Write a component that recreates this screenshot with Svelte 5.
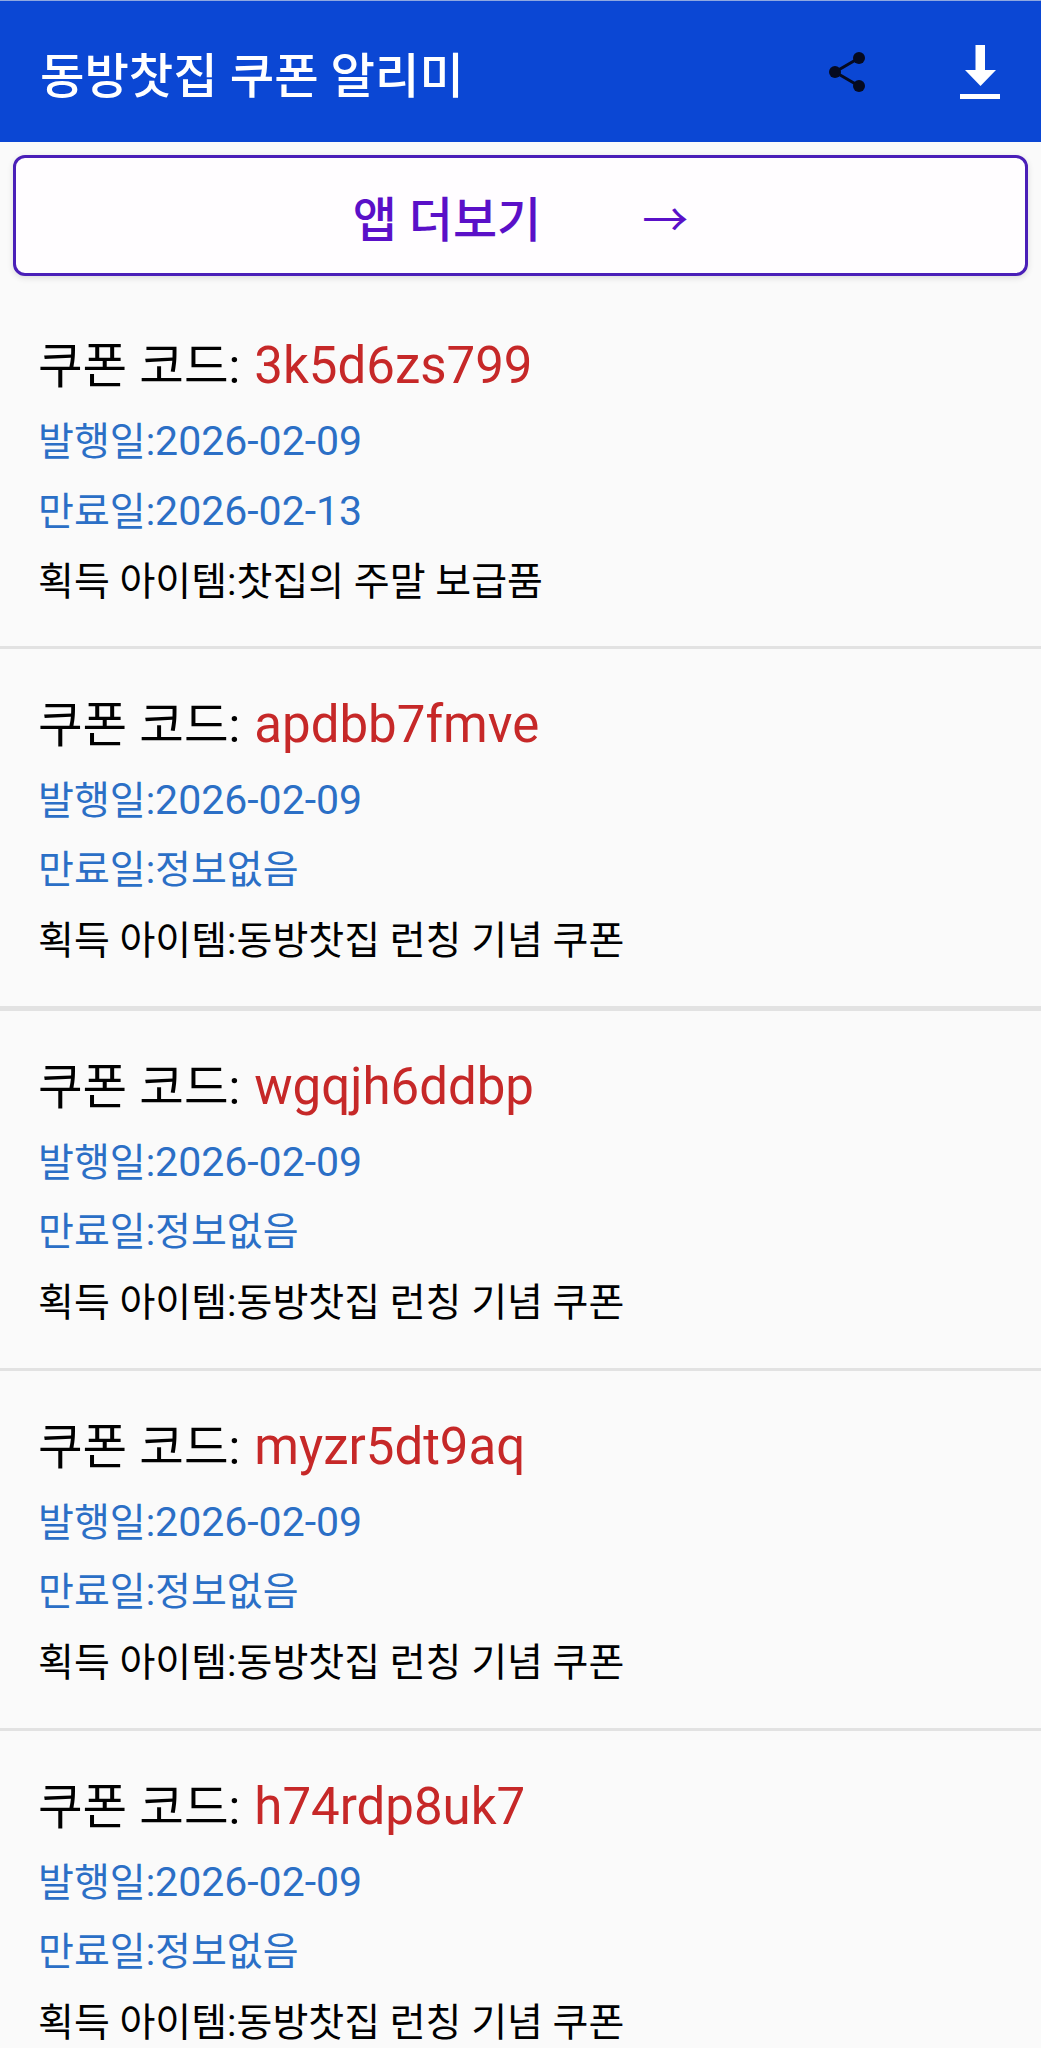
<script lang="ts">
	const coupons = [
		{ code: '3k5d6zs799', expires: '2026-02-13', item: '찻집의 주말 보급품' },
		{ code: 'apdbb7fmve', expires: null, item: '동방찻집 런칭 기념 쿠폰' },
		{ code: 'wgqjh6ddbp', expires: null, item: '동방찻집 런칭 기념 쿠폰' },
		{ code: 'myzr5dt9aq', expires: null, item: '동방찻집 런칭 기념 쿠폰' },
		{ code: 'h74rdp8uk7', expires: null, item: '동방찻집 런칭 기념 쿠폰' }
	];
</script>

<div class="page">
	<header class="bar">
		<h1>동방찻집 쿠폰 알리미</h1>
		<div class="actions">
			<button class="icon" aria-label="공유">
				<svg width="40" height="40" viewBox="0 0 40 40" fill="none">
					<path d="M33 6 L9 20 L33 34" stroke="#050a20" stroke-width="3" />
					<circle cx="33" cy="6" r="6" fill="#050a20" />
					<circle cx="9" cy="20" r="6" fill="#050a20" />
					<circle cx="33" cy="34" r="6" fill="#050a20" />
				</svg>
			</button>
			<button class="icon" aria-label="다운로드">
				<svg width="40" height="54" viewBox="0 0 40 54" fill="#fff">
					<path d="M15.5 0 H25 V25 H36 L20.5 41 L5 25 H15.5 Z" />
					<rect x="0" y="49" width="40" height="5" />
				</svg>
			</button>
		</div>
	</header>

	<button class="more">
		<span>앱 더보기</span>
		<span class="arrow">→</span>
	</button>

	<ul class="list">
		{#each coupons as c}
			<li>
				<div class="code">쿠폰 코드: <em>{c.code}</em></div>
				<div class="date">발행일:<span class="num">2026-02-09</span></div>
				<div class="date">
					만료일:{#if c.expires}<span class="num">{c.expires}</span>{:else}정보없음{/if}
				</div>
				<div class="item">획득 아이템:{c.item}</div>
			</li>
		{/each}
	</ul>
</div>

<style>
	:global(body) {
		margin: 0;
		background: #fafafa;
	}
	.page {
		height: 2048px;
		overflow: hidden;
		background: #fafafa;
		font-family: Roboto, 'Noto Sans CJK KR', sans-serif;
	}
	.bar {
		height: 142px;
		box-sizing: border-box;
		padding: 0 41px 0 40px;
		display: flex;
		align-items: center;
		justify-content: space-between;
		background: #0b47d4;
		border-top: 1px solid #8fa8e0;
		color: #fff;
	}
	h1 {
		margin: 0;
		font-size: 48.3px;
		font-weight: 500;
	}
	.actions {
		display: flex;
		align-items: center;
		gap: 94px;
	}
	.icon {
		padding: 0;
		border: 0;
		background: none;
		display: flex;
	}
	.more {
		display: flex;
		align-items: center;
		justify-content: center;
		gap: 101px;
		width: 1015px;
		height: 121px;
		margin: 13px 13px 0;
		box-sizing: border-box;
		border: 3px solid #4a1fb8;
		border-radius: 12px;
		background: #fffdff;
		box-shadow: 0 2px 6px rgba(0, 0, 0, 0.12);
		color: #5a10c8;
		font-family: inherit;
		font-size: 48px;
		font-weight: 500;
	}
	.arrow {
		font-size: 46px;
		font-weight: 400;
	}
	.list {
		margin: 0;
		padding: 0;
		list-style: none;
	}
	li {
		height: 360px;
		box-sizing: border-box;
		padding: 38px 38px 0;
		border-bottom: 3px solid #e2e2e2;
	}
	li:first-child {
		height: 373px;
		padding-top: 52px;
	}
	li:nth-child(2) {
		height: 362px;
		border-bottom-width: 5px;
	}
	.code {
		height: 78px;
		line-height: 75px;
		font-size: 48.5px;
		color: #000;
	}
	em {
		margin-left: 2px;
		font-style: normal;
		font-size: 51px;
		color: #c62828;
	}
	.date {
		height: 70px;
		line-height: 70px;
		font-size: 39px;
		color: #2b6fc6;
	}
	.num {
		font-size: 41px;
	}
	.item {
		height: 70px;
		line-height: 72px;
		font-size: 39px;
		color: #000;
	}
</style>
